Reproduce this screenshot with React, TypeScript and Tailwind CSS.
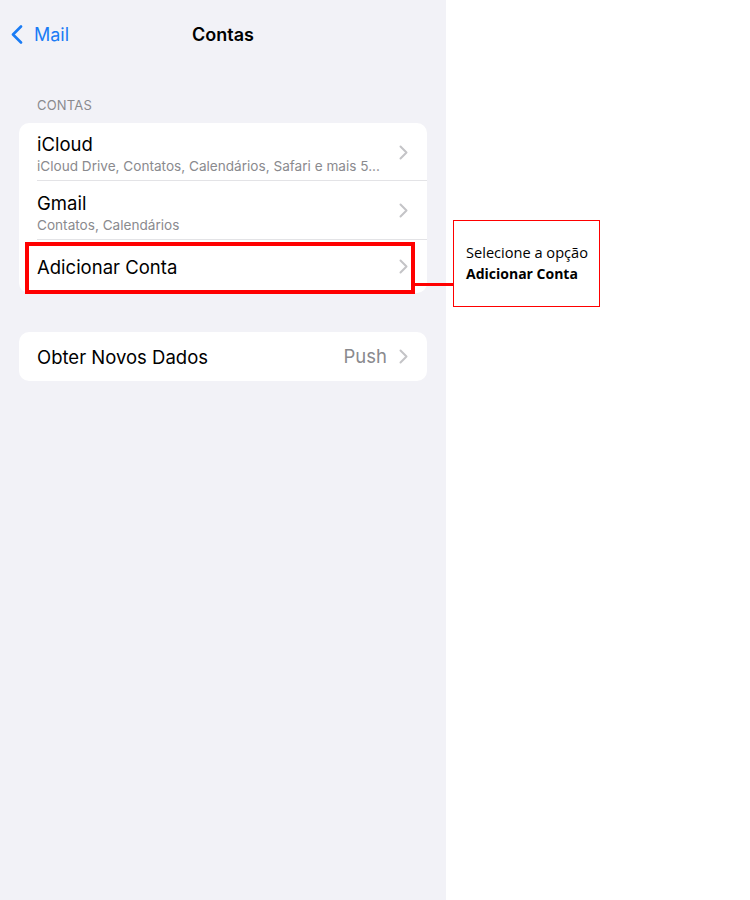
import React from "react";

const Chevron = () => (
  <svg width="9" height="15" viewBox="0 0 9 15" fill="none" className="shrink-0">
    <path d="M1.5 1.5L7.5 7.5L1.5 13.5" stroke="#c4c4c7" strokeWidth="2" strokeLinecap="round" strokeLinejoin="round" />
  </svg>
);

type RowProps = {
  title: string;
  subtitle?: string;
  value?: string;
  divider?: boolean;
  className?: string;
};

const Row: React.FC<RowProps> = ({ title, subtitle, value, divider, className }) => (
  <div className={"relative flex items-center pl-[18px] " + (className ?? "")}>
    <div className="flex flex-1 items-center h-full pr-[19px]">
      <div className={"flex-1 min-w-0 " + (subtitle ? "relative top-[2px]" : "")}>
        <div className="text-[18.5px] leading-[22px] text-black">{title}</div>
        {subtitle && <div className="mt-[2px] text-[13.6px] leading-[18px] text-[#8a8a8e] truncate pr-[18px]">{subtitle}</div>}
      </div>
      {value && <span className="text-[18.5px] text-[#8a8a8e] mr-[12px]">{value}</span>}
      <Chevron />
    </div>
    {divider && <div className="absolute left-[18px] right-0 bottom-0 h-px bg-[#e3e3e6]" />}
  </div>
);

export default function App() {
  return (
    <div className="relative w-[750px] h-[900px] bg-white flex" style={{ fontFamily: "Inter, 'Liberation Sans', sans-serif" }}>
      <div className="w-[446px] h-[900px] bg-[#f2f2f7] flex flex-col">
        <div className="relative h-[68px] flex items-center justify-center">
          <div className="absolute left-[11px] top-[25px] flex items-center gap-[11px] text-[#1a7cf5]">
            <svg width="12" height="19" viewBox="0 0 12 19" fill="none">
              <path d="M10 1.5L2 9.5L10 17.5" stroke="#1a7cf5" strokeWidth="2.6" strokeLinecap="round" strokeLinejoin="round" />
            </svg>
            <span className="text-[18px] leading-[18px]">Mail</span>
          </div>
          <span className="text-[18px] font-semibold text-black">Contas</span>
        </div>

        <div className="pl-[37px] mt-[29px] text-[13px] leading-[16px] text-[#8a8a8e] tracking-[0.2px]">CONTAS</div>

        <div className="relative mx-[19px] mt-[10px] bg-white rounded-[10px]">
          <Row title="iCloud" subtitle="iCloud Drive, Contatos, Calendários, Safari e mais 5..." divider className="h-[58px]" />
          <Row title="Gmail" subtitle="Contatos, Calendários" divider className="h-[59px]" />
          <Row title="Adicionar Conta" className="h-[53px]" />
          <div className="absolute left-[6px] top-[119px] w-[390px] h-[52px] border-[4px] border-[#ff0000]" />
        </div>

        <div className="mx-[19px] mt-[39px] bg-white rounded-[10px]">
          <Row title="Obter Novos Dados" value="Push" className="h-[49px]" />
        </div>
      </div>

      <div className="absolute left-[414px] top-[283px] w-[39px] h-[3px] bg-[#ff0000]" />
      <div
        className="absolute left-[453px] top-[220px] w-[147px] h-[87px] border border-[#ff0000] bg-white pl-[12px] pt-[21px] text-[14px] leading-[21px] text-black"
        style={{ fontFamily: "'Open Sans', 'Noto Sans', sans-serif" }}
      >
        <div className="text-[14.6px]">Selecione a opção</div>
        <div className="font-bold">Adicionar Conta</div>
      </div>
    </div>
  );
}
